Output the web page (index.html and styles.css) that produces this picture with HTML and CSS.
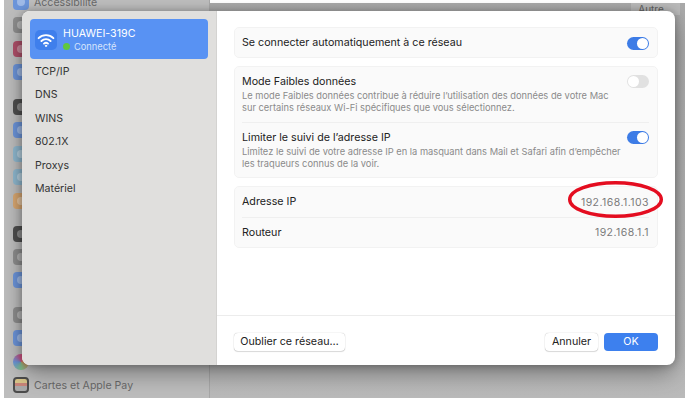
FILE: index.html
```html
<!DOCTYPE html>
<html lang="fr">
<head>
<meta charset="utf-8">
<title>HUAWEI-319C</title>
<link rel="stylesheet" href="styles.css">
</head>
<body>
<div class="desktop">
  <aside class="bg-side">
    <div class="bg-group first">
      <div class="bg-row"><span class="ic c-blue g"></span><span class="bg-label">Accessibilité</span></div>
      <span class="ic c-gray g"></span>
      <span class="ic c-pink g"></span>
      <span class="ic c-blue g"></span>
    </div>
    <div class="bg-group">
      <span class="ic c-dark g"></span>
      <span class="ic c-blue g"></span>
      <span class="ic c-lblue g"></span>
      <span class="ic c-lblue g"></span>
      <span class="ic c-orange g"></span>
    </div>
    <div class="bg-group g3">
      <span class="ic c-dark g"></span>
      <span class="ic c-gray g"></span>
      <span class="ic c-blue g"></span>
    </div>
    <div class="bg-group g4">
      <span class="ic c-gray g"></span>
      <span class="ic c-blue g"></span>
      <span class="ic c-multi"></span>
      <div class="bg-row"><span class="ic wallet"></span><span class="bg-label">Cartes et Apple Pay</span></div>
    </div>
  </aside>
  <div class="bg-main"><span class="bg-autre">Autre</span></div>

  <div class="dialog">
    <nav class="sidebar">
      <div class="network">
        <span class="net-icon">
          <svg viewBox="0 0 20 20" width="20" height="20" fill="none" stroke="#fff" stroke-linecap="round" stroke-width="1.9">
            <path d="M2.6 8.2a10.5 10.5 0 0 1 14.8 0"/>
            <path d="M5.4 11a6.5 6.5 0 0 1 9.2 0"/>
            <path d="M8 13.6a2.9 2.9 0 0 1 4 0"/>
            <circle cx="10" cy="15.8" r="0.7" fill="#fff" stroke-width="1"/>
          </svg>
        </span>
        <div class="net-text">
          <div class="net-name">HUAWEI-319C</div>
          <div class="net-status"><span class="dot"></span>Connecté</div>
        </div>
      </div>
      <ul class="menu">
        <li>TCP/IP</li>
        <li>DNS</li>
        <li>WINS</li>
        <li>802.1X</li>
        <li>Proxys</li>
        <li>Matériel</li>
      </ul>
    </nav>
    <section class="content">
      <div class="panels">
        <div class="card">
          <div class="row row-single">
            <span class="title">Se connecter automatiquement à ce réseau</span>
            <span class="toggle on"></span>
          </div>
        </div>
        <div class="card">
          <div class="row row-desc">
            <div class="text">
              <div class="title">Mode Faibles données</div>
              <p class="desc">Le mode Faibles données contribue à réduire l’utilisation des données de votre Mac sur certains réseaux Wi-Fi spécifiques que vous sélectionnez.</p>
            </div>
            <span class="toggle off"></span>
          </div>
          <div class="row row-desc divided">
            <div class="text">
              <div class="title">Limiter le suivi de l’adresse IP</div>
              <p class="desc">Limitez le suivi de votre adresse IP en la masquant dans Mail et Safari afin d’empêcher les traqueurs connus de la voir.</p>
            </div>
            <span class="toggle on"></span>
          </div>
        </div>
        <div class="card">
          <div class="row row-info">
            <span class="title">Adresse IP</span>
            <span class="value">192.168.1.103</span>
          </div>
          <div class="row row-info divided">
            <span class="title">Routeur</span>
            <span class="value">192.168.1.1</span>
          </div>
        </div>
      </div>
      <footer class="footer">
        <button class="btn forget">Oublier ce réseau…</button>
        <div class="actions">
          <button class="btn cancel">Annuler</button>
          <button class="btn ok">OK</button>
        </div>
      </footer>
    </section>
  </div>

  <svg class="circle" width="104" height="46" viewBox="0 0 104 46">
    <ellipse cx="52.5" cy="23.5" rx="45.8" ry="16.8" fill="none" stroke="#e40d20" stroke-width="3.4"/>
  </svg>
</div>
</body>
</html>
```

FILE: styles.css
```css
* { box-sizing: border-box; }

html, body {
  margin: 0;
  height: 100%;
  background: #fff;
}

body {
  padding: 0 5px 3px 4px;
  font-family: Inter, "Liberation Sans", sans-serif;
  overflow: hidden;
}

.desktop {
  position: relative;
  display: flex;
  width: 681px;
  height: 398px;
  overflow: hidden;
}

.bg-side {
  width: 206px;
  flex: none;
  padding-left: 9px;
  display: flex;
  flex-direction: column;
  background: #bdbdbd;
  border-right: 1px solid #a8a8a8;
}

.bg-main {
  flex: 1;
  margin-top: 3px;
  padding-right: 5px;
  display: flex;
  justify-content: flex-end;
  background: linear-gradient(#a9a9a9, #bababa);
}

.bg-autre {
  width: 49px;
  height: 12px;
  padding-right: 9px;
  font-size: 10px;
  line-height: 13px;
  text-align: center;
  color: #5f5f5f;
  background: #b9b9b9;
}

.bg-group {
  display: flex;
  flex-direction: column;
  gap: 7.4px;
  margin-top: 18.8px;
}

.bg-group.first { margin-top: -6px; }
.bg-group.g3 { margin-top: 17px; }
.bg-group.g4 { margin-top: 18.6px; }

.bg-row {
  display: flex;
  align-items: center;
  gap: 5px;
}

.bg-label {
  font-size: 10.6px;
  color: #6a6a6a;
  white-space: nowrap;
}

.ic {
  position: relative;
  display: block;
  flex: none;
  width: 16px;
  height: 16px;
  border-radius: 4px;
}

.g::after {
  content: "";
  position: absolute;
  left: 4px;
  top: 4px;
  width: 8px;
  height: 8px;
  border-radius: 50%;
  background: rgba(255, 255, 255, .35);
}

.c-blue { background: #6c95da; }
.c-gray { background: #8e8e8e; }
.c-pink { background: #b0506a; }
.c-dark { background: #4f4f4f; }
.c-lblue { background: #8fb8cf; }
.c-orange { background: #d9a871; }
.c-multi { background: conic-gradient(#d14f80, #d8925f, #7fbf8f, #6a93d8, #d14f80); border-radius: 50%; }
.wallet {
  border: 2px solid #4c4c4c;
  background: linear-gradient(#d9c68a 35%, #c9857a 35%, #c9857a 60%, #a9a9a9 60%);
}

.dialog {
  position: absolute;
  left: 18px;
  top: 11px;
  width: 653px;
  height: 354px;
  display: flex;
  overflow: hidden;
  border-radius: 8px;
  background: #fff;
  box-shadow: 0 0 8px rgba(0, 0, 0, .28), 0 10px 24px -2px rgba(0, 0, 0, .38);
}

.sidebar {
  width: 195px;
  flex: none;
  padding: 8px 8px 0 8px;
  background: #e0dfdd;
  border-right: 1px solid #d4d3d1;
}

.network {
  display: flex;
  align-items: center;
  gap: 6px;
  height: 40px;
  padding: 2px 6px 0 5px;
  border-radius: 4px;
  background: #5892f3;
  color: #fff;
}

.net-icon {
  display: flex;
  align-items: center;
  justify-content: center;
  width: 22px;
  height: 20px;
  border-radius: 5px;
  background: #3f7fec;
}

.net-name {
  font-size: 10.7px;
  line-height: 13px;
  color: #fff;
}

.net-status {
  display: flex;
  align-items: center;
  gap: 4px;
  font-size: 9.3px;
  line-height: 13px;
  color: #d6e4fb;
}

.dot {
  width: 7px;
  height: 7px;
  border-radius: 50%;
  background: #60c83e;
}

.menu {
  margin: 1px 0 0;
  padding: 0 0 0 5px;
  list-style: none;
}

.menu li {
  height: 23.4px;
  font-size: 10.6px;
  line-height: 23.4px;
  color: #333;
}

.content {
  flex: 1;
  display: flex;
  flex-direction: column;
  min-width: 0;
}

.panels {
  flex: 1;
  display: flex;
  flex-direction: column;
  gap: 8px;
  padding: 16px 17px 0 17px;
}

.card {
  border: 1px solid #f2f2f2;
  border-radius: 5px;
  background: #fafafa;
  padding: 0 8px 0 7px;
}

.row {
  display: flex;
  justify-content: space-between;
}

.row-single {
  align-items: center;
  height: 29px;
  padding-top: 1px;
}

.row-desc {
  height: 55px;
  padding-top: 8px;
}

.row-info {
  align-items: center;
  height: 30px;
}

.divided {
  border-top: 1px solid #efefef;
}

.text {
  width: 380px;
}

.title {
  font-size: 10.7px;
  line-height: 14px;
  color: #222;
}

.desc {
  margin: 1px 0 0;
  font-size: 9.3px;
  line-height: 12px;
  color: #8a8a8a;
}

.value {
  font-size: 10.5px;
  line-height: 13px;
  letter-spacing: .45px;
  color: #7b7b7b;
}

.toggle {
  position: relative;
  flex: none;
  width: 22px;
  height: 13px;
  border-radius: 7px;
}

.toggle::after {
  content: "";
  position: absolute;
  top: 1px;
  width: 11px;
  height: 11px;
  border-radius: 50%;
  background: #fff;
}

.toggle.on { background: #3d7ce6; }
.toggle.on::after { right: 1px; }
.toggle.off { background: #e1e1e1; }
.toggle.off::after { left: 1px; }

.footer {
  flex: none;
  height: 50px;
  display: flex;
  justify-content: space-between;
  padding: 17px 17px 0 17px;
  border-top: 1px solid #ececec;
}

.actions {
  display: flex;
  gap: 6px;
}

.btn {
  height: 18px;
  padding: 0;
  border: 0;
  border-radius: 4px;
  font: 10.7px/18px Inter, "Liberation Sans", sans-serif;
  color: #222;
  background: #fff;
  box-shadow: 0 0 1px rgba(0, 0, 0, .35), 0 1px 1px rgba(0, 0, 0, .12);
}

.forget { width: 111px; }
.cancel { width: 53px; }

.ok {
  width: 54px;
  color: #fff;
  background: #3d80ee;
  box-shadow: none;
}

.circle {
  position: absolute;
  left: 559px;
  top: 176px;
}
```
